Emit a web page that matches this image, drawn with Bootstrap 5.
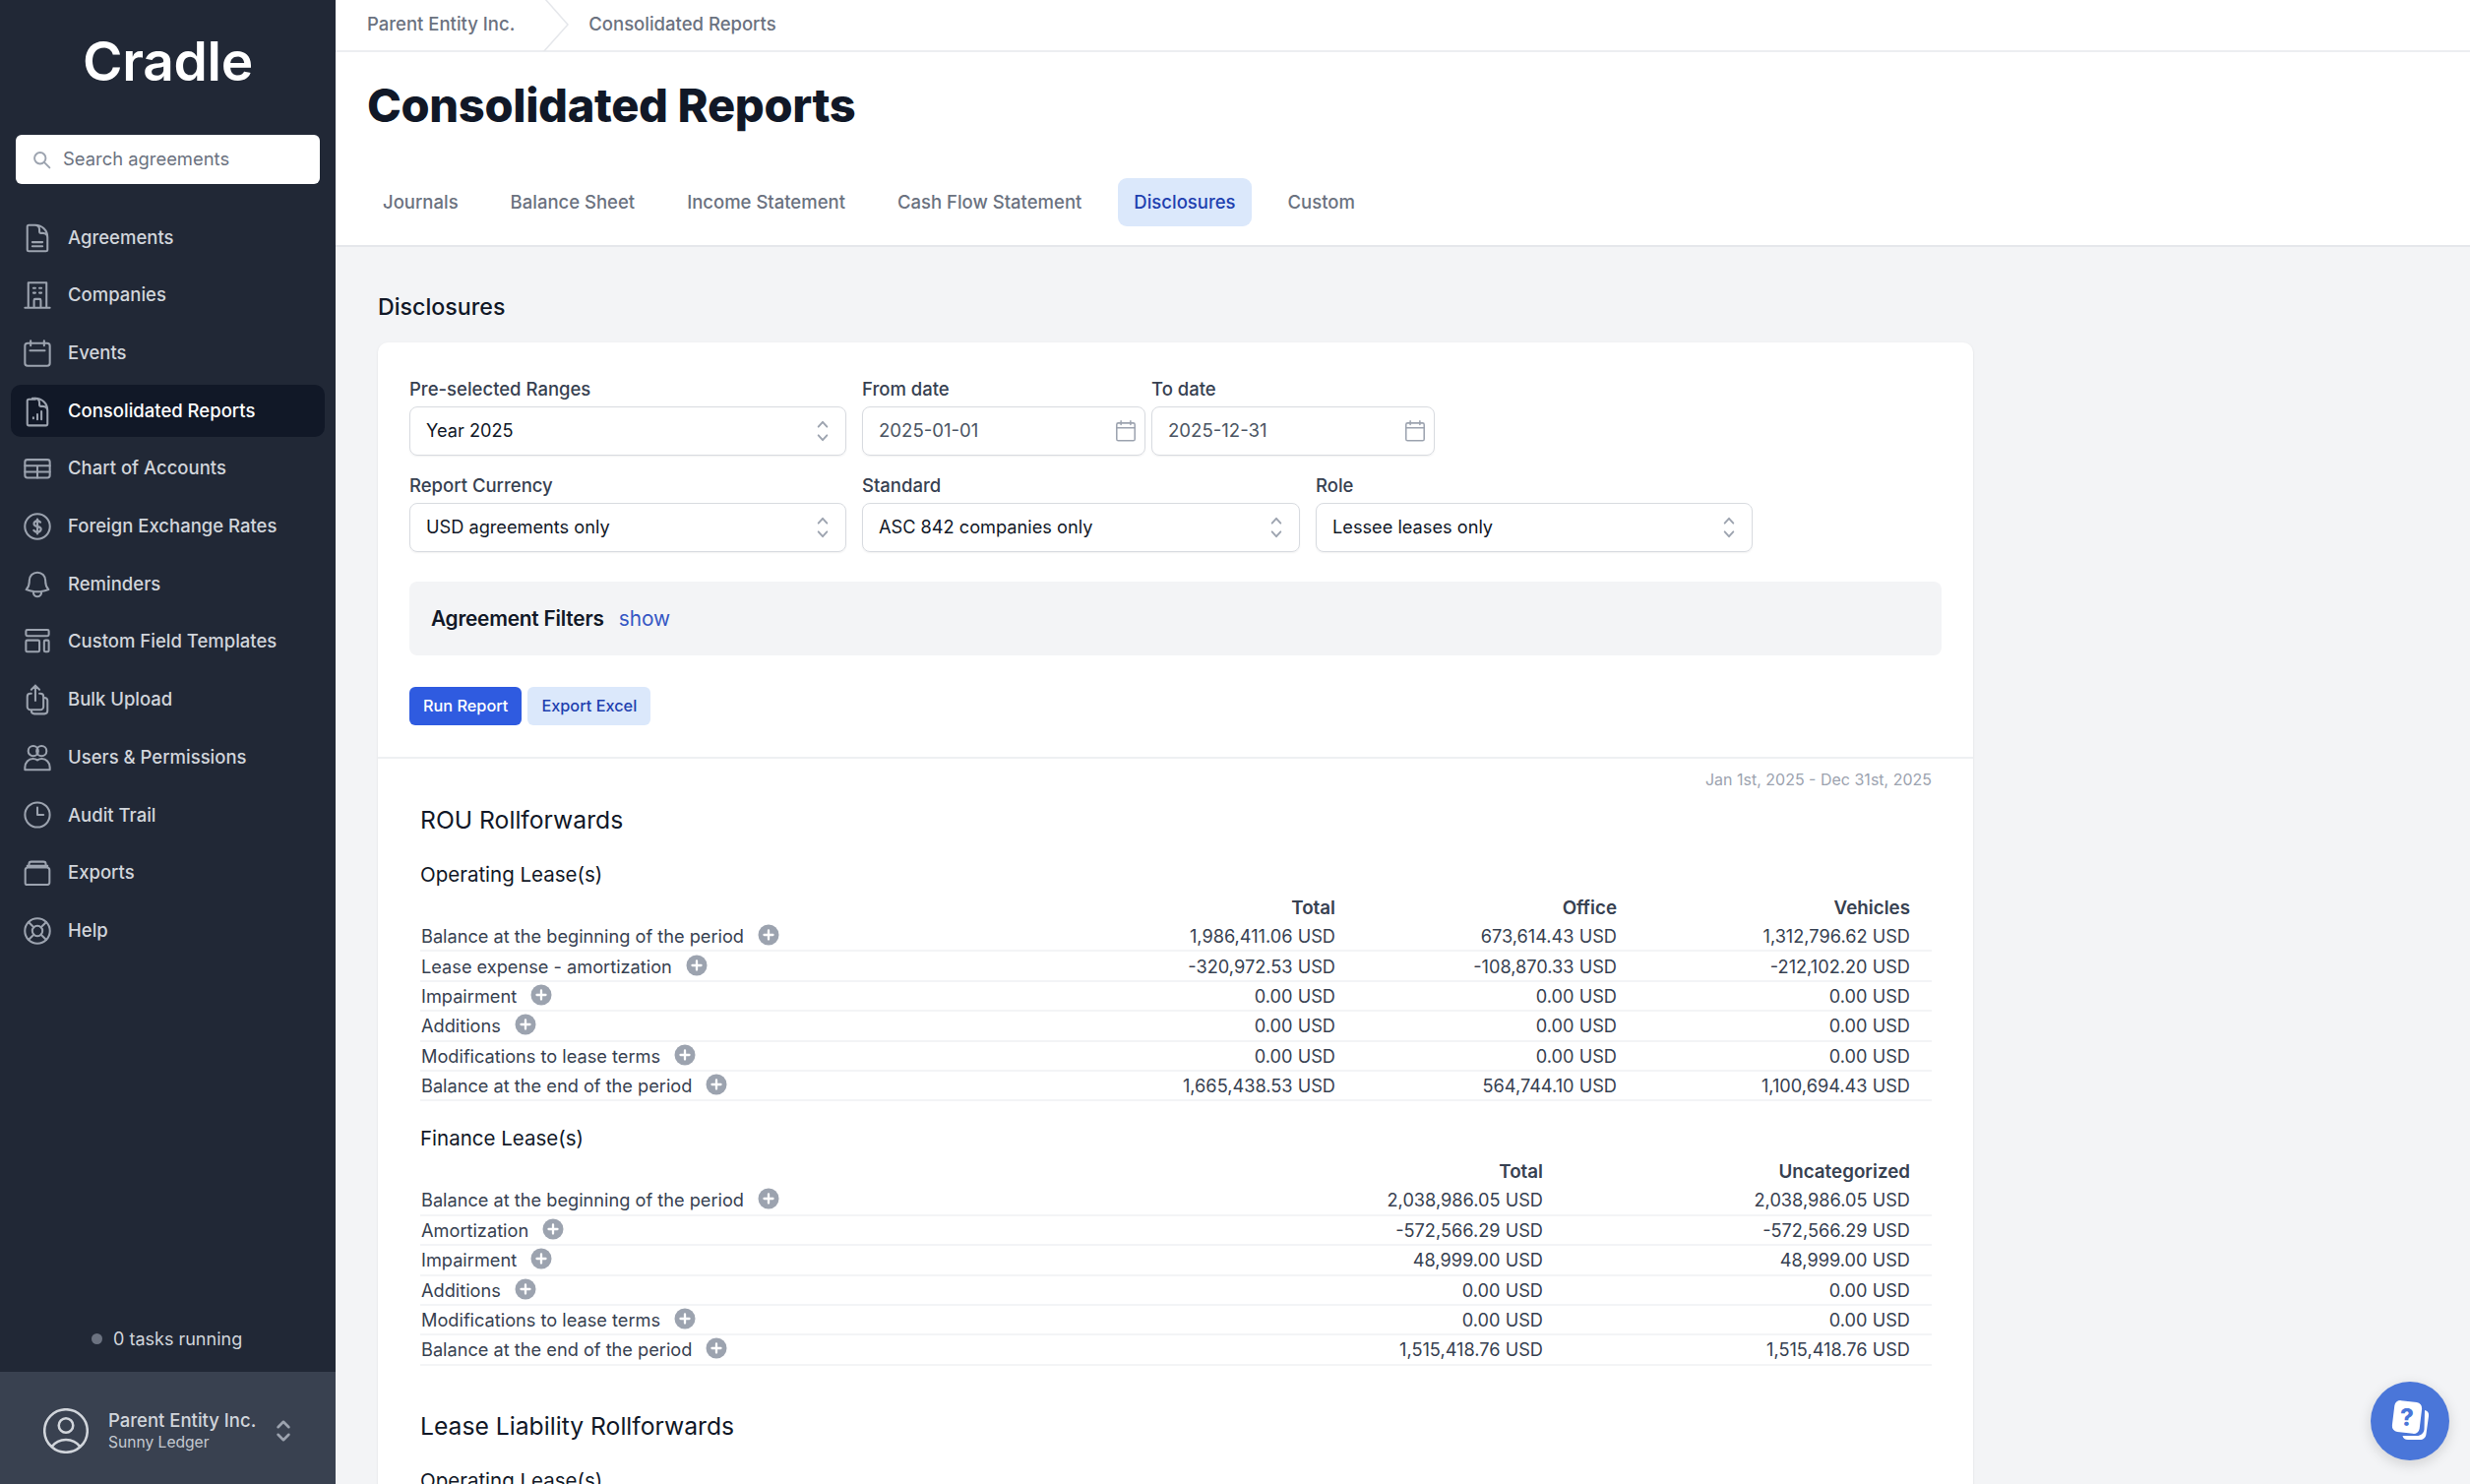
<!doctype html>
<html lang="en">
<head>
<meta charset="utf-8">
<title>Consolidated Reports</title>
<link href="https://cdn.jsdelivr.net/npm/bootstrap@5.3.0/dist/css/bootstrap.min.css" rel="stylesheet">
<style>
html,body{height:100%;}
body{font-family:Inter,"Liberation Sans",sans-serif;background:#f3f4f6;overflow:hidden;color:#374151;}
.shell{height:1508px;position:relative;}
.side{width:341px;flex:none;background:#212836;}
.brand{height:137px;padding-top:24px;font-size:55px;line-height:76px;font-weight:600;letter-spacing:-.3px;color:#fff;text-align:center;}
.srch{margin:0 16px 28px;height:50px;background:#fff;border-radius:6px;padding-left:16px;gap:11px;color:#6b7280;font-size:18.4px;}
.srch svg{width:21px;height:21px;color:#9ca3af;}
.menu{padding:0 11px;gap:5.7px;}
.menu-i{height:53px;padding-left:14px;gap:18px;border-radius:10px;color:#d1d5db;font-size:18.5px;font-weight:500;}
.menu-i svg{width:26px;height:26px;color:#9ca3af;flex:none;overflow:visible;}
.menu-i.on{background:#111827;color:#fff;}
.tasks{padding-left:93px;height:68px;gap:11px;font-size:18px;color:#d1d5db;}
.tasks i{width:11px;height:11px;border-radius:50%;background:#6b7280;display:block;}
.acct{height:114px;background:#394150;padding:5px 44px 0 44px;gap:20px;color:#d1d5db;}
.acct .face{width:46px;height:46px;flex:none;}
.acct .nm{font-size:18.5px;font-weight:500;line-height:24px;white-space:nowrap;}
.acct .sub{font-size:15.6px;line-height:22px;color:#c4c9d1;}
.acct .sw{width:26px;height:26px;flex:none;color:#9ca3af;margin-left:-5px;}
.main{min-width:0;position:relative;overflow:hidden;}
.head{background:#fff;border-bottom:2px solid #e5e7eb;height:251px;}
.crumb{height:53px;border-bottom:2px solid #eceef1;padding:0 0 2px 32px;font-size:18.5px;font-weight:500;color:#6b7280;}
.crumb svg{width:32px;height:52px;margin:2px 15px 0 28px;flex:none;}
.ttl{font-size:47px;font-weight:800;color:#111827;line-height:60px;margin:24px 0 0 32px;letter-spacing:-.35px;}
.tabs{margin:44px 0 0 32px;gap:21px;}
.tabs .nav-link{height:49px;padding:1px 16px 0;display:flex;align-items:center;font-size:18.5px;font-weight:500;color:#6b7280;border-radius:9px;}
.tabs .nav-link.active{background:#dbe8fb;color:#1e40af;}
.sect{font-size:23.2px;font-weight:500;color:#111827;line-height:32px;margin:45px 0 20px 43px;}
.sheet{margin-left:43px;width:1621px;background:#fff;border:0;border-radius:10px;box-shadow:0 1px 3px rgba(0,0,0,.08);}
.frm{padding:35px 32px 32px;border-bottom:2px solid #eef0f2;}
.lab{font-size:18.5px;font-weight:500;color:#374151;line-height:24px;margin-bottom:6px;height:24px;}
.fld{height:50px;border:1.5px solid #d8dbe0;border-radius:8px;padding:0 13px 0 16px;font-size:18.2px;color:#111827;box-shadow:0 1px 2px rgba(0,0,0,.06);}
.fld svg{width:26px;height:26px;color:#9ca3af;flex:none;margin-right:-3px;}
.fld.gry{font-size:18.6px;color:#4b5563;}
.fld.gry svg{margin-right:-7px;}
.w1{width:444px;margin-right:16px;}
.w2{width:288px;margin-right:6px;}
.w3{width:445px;margin-right:16px;}
.rw{margin-bottom:18px;}
.flt{height:75px;background:#f3f4f6;border-radius:8px;padding-left:22px;margin-top:30px;gap:15px;font-size:20.8px;}
.flt b{font-weight:600;color:#111827;letter-spacing:-.2px;}
.flt span{color:#3557c4;}
.btns{margin-top:32px;gap:6px;}
.btns .btn{height:39px;padding:0 14px;border:0;font-size:16.3px;font-weight:500;border-radius:6px;display:flex;align-items:center;}
.b-run{background:#2f5be0;color:#fff;}
.b-exp{background:#dbe8fb;color:#1e40af;}
.rep{padding:0 42px 220px 43px;position:relative;}
.when{text-align:right;font-size:16px;color:#9ca3af;line-height:22px;padding-top:10px;}
.h-a{font-size:24.7px;font-weight:400;color:#111827;line-height:36px;margin:12px 0 0;}
.h-a.nxt{margin-top:43px;}
.h-b{font-size:20.5px;font-weight:400;color:#111827;line-height:28px;margin:24px 0 0;}
.h-b.nxt{margin-top:24px;}
.t-wrap{margin:7px 0 0;}
.sh{width:100%;table-layout:fixed;border-collapse:collapse;font-size:18.2px;color:#374151;}
.sh th{font-weight:600;font-size:18.8px;height:26px;line-height:24px;text-align:right;padding:0 22px 0 0;border:0;}
.sh td{height:30.4px;padding:0 22px 0 0;text-align:right;border-bottom:2px solid #f3f4f6;line-height:24px;white-space:nowrap;}
.sh td:first-child{padding:0 0 0 1px;text-align:left;}
.plus{display:inline-block;width:22px;height:22px;margin-left:14px;vertical-align:-3px;margin-top:-3px;}
.c-a{width:400px;}.c-o{width:286px;}.c-v{width:298px;}.c-u{width:373px;}
.fade{position:absolute;left:0;right:0;bottom:0;height:68px;background:linear-gradient(to bottom,rgba(0,0,0,0),rgba(0,0,0,.06));-webkit-mask-image:linear-gradient(to right,#000 70%,transparent 92%);mask-image:linear-gradient(to right,#000 70%,transparent 92%);pointer-events:none;}
.help{position:absolute;right:21px;bottom:24px;width:80px;height:80px;border-radius:50%;background:#4a76d9;box-shadow:0 4px 14px rgba(0,0,0,.14);display:flex;align-items:center;justify-content:center;}
.help svg{width:46px;height:46px;}
</style>
</head>
<body>
<div class="shell d-flex">
  <aside class="side d-flex flex-column">
    <div class="brand">Cradle</div>
    <div class="srch d-flex align-items-center">
      <svg viewBox="0 0 24 24" fill="none" stroke="currentColor" stroke-width="2.2" stroke-linecap="round"><circle cx="10" cy="10" r="6.500"/><path d="m15 15 6 6"/></svg>
      <span>Search agreements</span>
    </div>
    <nav class="menu d-flex flex-column flex-grow-1">
      <div class="menu-i d-flex align-items-center"><svg viewBox="2.5 2.5 19 19" fill="none" stroke="currentColor" stroke-width="1.5" stroke-linecap="round" stroke-linejoin="round"><path d="M19.5 14.25v-2.625a3.375 3.375 0 0 0-3.375-3.375h-1.5A1.125 1.125 0 0 1 13.5 7.125v-1.5a3.375 3.375 0 0 0-3.375-3.375H8.25m0 12.75h7.5m-7.5 3h7.500M10.5 2.25H5.625c-.621 0-1.125.504-1.125 1.125v17.25c0 .621.504 1.125 1.125 1.125h12.75c.621 0 1.125-.504 1.125-1.125V11.25a9 9 0 0 0-9-9Z"/></svg><span>Agreements</span></div>
      <div class="menu-i d-flex align-items-center"><svg viewBox="2.5 2.5 19 19" fill="none" stroke="currentColor" stroke-width="1.5" stroke-linecap="round" stroke-linejoin="round"><path d="M2.750 21.250h18.500M5.250 2.750h13.500M5.250 2.750v18.500m13.500-18.500v18.500M9 6.750h1.500m3 0H15M9 10.250h1.500m3 0H15M9.500 21.250v-5.500c0-.5.400-.9.900-.9h3.200c.5 0 .9.400.9.900v5.500"/></svg><span>Companies</span></div>
      <div class="menu-i d-flex align-items-center"><svg viewBox="2.5 2.5 19 19" fill="none" stroke="currentColor" stroke-width="1.5" stroke-linecap="round" stroke-linejoin="round"><rect x="2.750" y="4.500" width="18.500" height="16.750" rx="2"/><path d="M7 2.750v3.500M17 2.750v3.500M6.500 10h11"/></svg><span>Events</span></div>
      <div class="menu-i on d-flex align-items-center"><svg viewBox="2.5 2.5 19 19" fill="none" stroke="currentColor" stroke-width="1.5" stroke-linecap="round" stroke-linejoin="round"><path d="M19.5 14.25v-2.625a3.375 3.375 0 0 0-3.375-3.375h-1.5A1.125 1.125 0 0 1 13.5 7.125v-1.5a3.375 3.375 0 0 0-3.375-3.375H8.25M9 16.5v.75m3-3v3.75m3-6v6m-4.5-15H5.625c-.621 0-1.125.504-1.125 1.125v17.25c0 .621.504 1.125 1.125 1.125h12.75c.621 0 1.125-.504 1.125-1.125V11.25a9 9 0 0 0-9-9Z"/></svg><span>Consolidated Reports</span></div>
      <div class="menu-i d-flex align-items-center"><svg viewBox="2.5 2.5 19 19" fill="none" stroke="currentColor" stroke-width="1.5" stroke-linecap="round" stroke-linejoin="round"><rect x="2.750" y="5.500" width="18.500" height="13.500" rx="1.800"/><path d="M2.750 10h18.500M2.750 14.500h18.500M12 10v9"/></svg><span>Chart of Accounts</span></div>
      <div class="menu-i d-flex align-items-center"><svg viewBox="2.5 2.5 19 19" fill="none" stroke="currentColor" stroke-width="1.5" stroke-linecap="round" stroke-linejoin="round"><circle cx="12" cy="12" r="9.300"/><path stroke-width="1.600" d="M12 6.500v11m-2.700-2.600.8.600c1.050.8 2.750.8 3.800 0 1.050-.8 1.050-2.100 0-2.900-.5-.4-1.200-.6-1.900-.6-.65 0-1.300-.2-1.800-.6-1-.8-1-2.100 0-2.900s2.600-.8 3.600 0l.4.300"/></svg><span>Foreign Exchange Rates</span></div>
      <div class="menu-i d-flex align-items-center"><svg viewBox="2.5 2.5 19 19" fill="none" stroke="currentColor" stroke-width="1.5" stroke-linecap="round" stroke-linejoin="round"><path d="M14.857 17.082a23.848 23.848 0 0 0 5.454-1.31A8.967 8.967 0 0 1 18 9.75V9A6 6 0 0 0 6 9v.75a8.967 8.967 0 0 1-2.312 6.022c1.733.64 3.56 1.085 5.455 1.31m5.714 0a24.255 24.255 0 0 1-5.714 0m5.714 0a3 3 0 1 1-5.714 0"/></svg><span>Reminders</span></div>
      <div class="menu-i d-flex align-items-center"><svg viewBox="2.5 2.5 19 19" fill="none" stroke="currentColor" stroke-width="1.5" stroke-linecap="round" stroke-linejoin="round"><rect x="3.500" y="3.250" width="17" height="4.500" rx="1"/><rect x="3.500" y="11" width="10" height="8.500" rx="1"/><rect x="17" y="11" width="3.500" height="8.500" rx="1"/></svg><span>Custom Field Templates</span></div>
      <div class="menu-i d-flex align-items-center"><svg viewBox="2.5 2.5 19 19" fill="none" stroke="currentColor" stroke-width="1.5" stroke-linecap="round" stroke-linejoin="round"><path d="M7.500 7.500h-.75A2.250 2.250 0 0 0 4.500 9.750v7.500a2.250 2.250 0 0 0 2.250 2.250h7.500a2.250 2.250 0 0 0 2.250-2.250v-7.500a2.250 2.250 0 0 0-2.250-2.250h-.75m0-3-3-3m0 0-3 3m3-3v11.250m6-2.250h.75a2.250 2.250 0 0 1 2.250 2.250v7.500a2.250 2.250 0 0 1-2.250 2.250h-7.500a2.250 2.250 0 0 1-2.250-2.250v-.75"/></svg><span>Bulk Upload</span></div>
      <div class="menu-i d-flex align-items-center"><svg viewBox="2.5 2.5 19 19" fill="none" stroke="currentColor" stroke-width="1.5" stroke-linecap="round" stroke-linejoin="round"><circle cx="8.900" cy="7" r="3.700"/><circle cx="15.100" cy="7" r="3.700"/><path d="M2.750 21v-1.800c0-3.800 2.800-6.500 5.900-6.500 1.400 0 2.500.4 3.350 1.100.85-.7 1.950-1.100 3.350-1.100 3.100 0 5.900 2.700 5.900 6.500V21H2.750Z"/></svg><span>Users &amp; Permissions</span></div>
      <div class="menu-i d-flex align-items-center"><svg viewBox="2.5 2.5 19 19" fill="none" stroke="currentColor" stroke-width="1.5" stroke-linecap="round" stroke-linejoin="round"><circle cx="12" cy="12" r="9.200"/><path d="M12 6.500V12h4.500"/></svg><span>Audit Trail</span></div>
      <div class="menu-i d-flex align-items-center"><svg viewBox="2.5 2.5 19 19" fill="none" stroke="currentColor" stroke-width="1.5" stroke-linecap="round" stroke-linejoin="round"><path d="M5.750 7.500V5.500a1.800 1.800 0 0 1 1.800-1.800h8.900a1.800 1.800 0 0 1 1.800 1.800v2M4.500 6.800h15M3 19.200V10a2 2 0 0 1 2-2h14a2 2 0 0 1 2 2v9.200a1.500 1.500 0 0 1-1.500 1.500h-16A1.500 1.500 0 0 1 3 19.200Z"/></svg><span>Exports</span></div>
      <div class="menu-i d-flex align-items-center"><svg viewBox="2.5 2.5 19 19" fill="none" stroke="currentColor" stroke-width="1.5" stroke-linecap="round" stroke-linejoin="round"><circle cx="12" cy="12" r="9.300"/><circle cx="12" cy="12" r="3.800"/><path d="m5.400 5.400 3.900 3.900m5.400 5.400 3.900 3.900m0-13.200-3.900 3.900m-5.400 5.400-3.900 3.900"/></svg><span>Help</span></div>
    </nav>
    <div class="tasks d-flex align-items-center"><i></i><span>0 tasks running</span></div>
    <div class="acct d-flex align-items-center">
      <svg class="face" viewBox="2.5 2.5 19 19" fill="none" stroke="currentColor" stroke-width="1.050" stroke-linecap="round" stroke-linejoin="round"><path d="M17.982 18.725A7.488 7.488 0 0 0 12 15.75a7.488 7.488 0 0 0-5.982 2.975m11.963 0a9 9 0 1 0-11.963 0m11.963 0A8.966 8.966 0 0 1 12 21a8.966 8.966 0 0 1-5.982-2.275M15 9.75a3 3 0 1 1-6 0 3 3 0 0 1 6 0Z"/></svg>
      <div><div class="nm">Parent Entity Inc.</div><div class="sub">Sunny Ledger</div></div>
      <svg class="sw" viewBox="0 0 24 24" fill="none" stroke="currentColor" stroke-width="2.400" stroke-linecap="round" stroke-linejoin="round"><path d="m7 8.500 5-5 5 5M7 15.500l5 5 5-5"/></svg>
    </div>
  </aside>

  <main class="main flex-grow-1">
    <header class="head">
      <div class="crumb d-flex align-items-center">
        <span>Parent Entity Inc.</span>
        <svg viewBox="0 0 32 52" fill="none" stroke="#e5e7eb" stroke-width="1.500"><path d="M3 -1 26 25 1 53"/></svg>
        <span>Consolidated Reports</span>
      </div>
      <h1 class="ttl">Consolidated Reports</h1>
      <ul class="nav nav-pills tabs">
        <li class="nav-item"><a class="nav-link" href="#">Journals</a></li>
        <li class="nav-item"><a class="nav-link" href="#">Balance Sheet</a></li>
        <li class="nav-item"><a class="nav-link" href="#">Income Statement</a></li>
        <li class="nav-item"><a class="nav-link" href="#">Cash Flow Statement</a></li>
        <li class="nav-item"><a class="nav-link active" href="#">Disclosures</a></li>
        <li class="nav-item"><a class="nav-link" href="#">Custom</a></li>
      </ul>
    </header>

    <div class="sect">Disclosures</div>
    <section class="sheet">
      <div class="frm">
        <div class="d-flex rw">
          <div class="w1"><div class="lab">Pre-selected Ranges</div><div class="fld d-flex align-items-center justify-content-between"><span>Year 2025</span><svg viewBox="0 0 24 24" fill="none" stroke="currentColor" stroke-width="1.700" stroke-linecap="round" stroke-linejoin="round"><path d="m8 8 4-4.500 4 4.500M8 16l4 4.500 4-4.500"/></svg></div></div>
          <div class="w2"><div class="lab">From date</div><div class="fld gry d-flex align-items-center justify-content-between"><span>2025-01-01</span><svg viewBox="0 0 24 24" fill="none" stroke="currentColor" stroke-width="1.400" stroke-linecap="round" stroke-linejoin="round"><rect x="3.500" y="4.500" width="17" height="16.500" rx="1.500"/><path d="M7.500 2.500v3.500M16.500 2.500v3.500M3.500 9h17"/></svg></div></div>
          <div class="w2"><div class="lab">To date</div><div class="fld gry d-flex align-items-center justify-content-between"><span>2025-12-31</span><svg viewBox="0 0 24 24" fill="none" stroke="currentColor" stroke-width="1.400" stroke-linecap="round" stroke-linejoin="round"><rect x="3.500" y="4.500" width="17" height="16.500" rx="1.500"/><path d="M7.500 2.500v3.500M16.500 2.500v3.500M3.500 9h17"/></svg></div></div>
        </div>
        <div class="d-flex">
          <div class="w1"><div class="lab">Report Currency</div><div class="fld d-flex align-items-center justify-content-between"><span>USD agreements only</span><svg viewBox="0 0 24 24" fill="none" stroke="currentColor" stroke-width="1.700" stroke-linecap="round" stroke-linejoin="round"><path d="m8 8 4-4.500 4 4.500M8 16l4 4.500 4-4.500"/></svg></div></div>
          <div class="w3"><div class="lab">Standard</div><div class="fld d-flex align-items-center justify-content-between"><span>ASC 842 companies only</span><svg viewBox="0 0 24 24" fill="none" stroke="currentColor" stroke-width="1.700" stroke-linecap="round" stroke-linejoin="round"><path d="m8 8 4-4.500 4 4.500M8 16l4 4.500 4-4.500"/></svg></div></div>
          <div class="w1"><div class="lab">Role</div><div class="fld d-flex align-items-center justify-content-between"><span>Lessee leases only</span><svg viewBox="0 0 24 24" fill="none" stroke="currentColor" stroke-width="1.700" stroke-linecap="round" stroke-linejoin="round"><path d="m8 8 4-4.500 4 4.500M8 16l4 4.500 4-4.500"/></svg></div></div>
        </div>
        <div class="flt d-flex align-items-center"><b>Agreement Filters</b><span>show</span></div>
        <div class="btns d-flex">
          <button class="btn b-run" type="button">Run Report</button>
          <button class="btn b-exp" type="button">Export Excel</button>
        </div>
      </div>
      <div class="rep">
        <div class="when">Jan 1st, 2025 - Dec 31st, 2025</div>
        <h2 class="h-a">ROU Rollforwards</h2>
        <h3 class="h-b">Operating Lease(s)</h3>
        <div class="t-wrap">
          <table class="sh">
            <colgroup><col><col class="c-a"><col class="c-o"><col class="c-v"></colgroup>
            <thead><tr><th></th><th>Total</th><th>Office</th><th>Vehicles</th></tr></thead>
            <tbody>
              <tr><td>Balance at the beginning of the period<svg class="plus" viewBox="0 0 22 22"><circle cx="11" cy="11" r="10.500" fill="#9ca3af"/><path d="M11 6.500v9M6.500 11h9" stroke="#fff" stroke-width="2.300" stroke-linecap="round"/></svg></td><td>1,986,411.06 USD</td><td>673,614.43 USD</td><td>1,312,796.62 USD</td></tr>
              <tr><td>Lease expense - amortization<svg class="plus" viewBox="0 0 22 22"><circle cx="11" cy="11" r="10.500" fill="#9ca3af"/><path d="M11 6.500v9M6.500 11h9" stroke="#fff" stroke-width="2.300" stroke-linecap="round"/></svg></td><td>-320,972.53 USD</td><td>-108,870.33 USD</td><td>-212,102.20 USD</td></tr>
              <tr><td>Impairment<svg class="plus" viewBox="0 0 22 22"><circle cx="11" cy="11" r="10.500" fill="#9ca3af"/><path d="M11 6.500v9M6.500 11h9" stroke="#fff" stroke-width="2.300" stroke-linecap="round"/></svg></td><td>0.00 USD</td><td>0.00 USD</td><td>0.00 USD</td></tr>
              <tr><td>Additions<svg class="plus" viewBox="0 0 22 22"><circle cx="11" cy="11" r="10.500" fill="#9ca3af"/><path d="M11 6.500v9M6.500 11h9" stroke="#fff" stroke-width="2.300" stroke-linecap="round"/></svg></td><td>0.00 USD</td><td>0.00 USD</td><td>0.00 USD</td></tr>
              <tr><td>Modifications to lease terms<svg class="plus" viewBox="0 0 22 22"><circle cx="11" cy="11" r="10.500" fill="#9ca3af"/><path d="M11 6.500v9M6.500 11h9" stroke="#fff" stroke-width="2.300" stroke-linecap="round"/></svg></td><td>0.00 USD</td><td>0.00 USD</td><td>0.00 USD</td></tr>
              <tr><td>Balance at the end of the period<svg class="plus" viewBox="0 0 22 22"><circle cx="11" cy="11" r="10.500" fill="#9ca3af"/><path d="M11 6.500v9M6.500 11h9" stroke="#fff" stroke-width="2.300" stroke-linecap="round"/></svg></td><td>1,665,438.53 USD</td><td>564,744.10 USD</td><td>1,100,694.43 USD</td></tr>
            </tbody>
          </table>
        </div>
        <h3 class="h-b nxt">Finance Lease(s)</h3>
        <div class="t-wrap">
          <table class="sh">
            <colgroup><col><col class="c-a"><col class="c-u"></colgroup>
            <thead><tr><th></th><th>Total</th><th>Uncategorized</th></tr></thead>
            <tbody>
              <tr><td>Balance at the beginning of the period<svg class="plus" viewBox="0 0 22 22"><circle cx="11" cy="11" r="10.500" fill="#9ca3af"/><path d="M11 6.500v9M6.500 11h9" stroke="#fff" stroke-width="2.300" stroke-linecap="round"/></svg></td><td>2,038,986.05 USD</td><td>2,038,986.05 USD</td></tr>
              <tr><td>Amortization<svg class="plus" viewBox="0 0 22 22"><circle cx="11" cy="11" r="10.500" fill="#9ca3af"/><path d="M11 6.500v9M6.500 11h9" stroke="#fff" stroke-width="2.300" stroke-linecap="round"/></svg></td><td>-572,566.29 USD</td><td>-572,566.29 USD</td></tr>
              <tr><td>Impairment<svg class="plus" viewBox="0 0 22 22"><circle cx="11" cy="11" r="10.500" fill="#9ca3af"/><path d="M11 6.500v9M6.500 11h9" stroke="#fff" stroke-width="2.300" stroke-linecap="round"/></svg></td><td>48,999.00 USD</td><td>48,999.00 USD</td></tr>
              <tr><td>Additions<svg class="plus" viewBox="0 0 22 22"><circle cx="11" cy="11" r="10.500" fill="#9ca3af"/><path d="M11 6.500v9M6.500 11h9" stroke="#fff" stroke-width="2.300" stroke-linecap="round"/></svg></td><td>0.00 USD</td><td>0.00 USD</td></tr>
              <tr><td>Modifications to lease terms<svg class="plus" viewBox="0 0 22 22"><circle cx="11" cy="11" r="10.500" fill="#9ca3af"/><path d="M11 6.500v9M6.500 11h9" stroke="#fff" stroke-width="2.300" stroke-linecap="round"/></svg></td><td>0.00 USD</td><td>0.00 USD</td></tr>
              <tr><td>Balance at the end of the period<svg class="plus" viewBox="0 0 22 22"><circle cx="11" cy="11" r="10.500" fill="#9ca3af"/><path d="M11 6.500v9M6.500 11h9" stroke="#fff" stroke-width="2.300" stroke-linecap="round"/></svg></td><td>1,515,418.76 USD</td><td>1,515,418.76 USD</td></tr>
            </tbody>
          </table>
        </div>
        <h2 class="h-a nxt">Lease Liability Rollforwards</h2>
        <h3 class="h-b">Operating Lease(s)</h3>
      </div>
    </section>
    <div class="fade"></div>
    <div class="help">
      <svg viewBox="0 0 46 46"><path d="M38 12c3 .5 4.500 2.500 4 6l-2.500 18c-.5 4-3 6-6.500 6H21c-3 0-5-1.500-5.500-4H30c4 0 7-2.500 7.500-6.500Z" fill="#fff"/><rect x="6" y="3" width="28" height="32" rx="6" fill="#fff" transform="rotate(7 20 19)"/><text x="20" y="28" text-anchor="middle" font-family="Inter,sans-serif" font-size="24" font-weight="800" fill="#4a76d9">?</text></svg>
    </div>
  </main>
</div>
<script src="https://cdn.jsdelivr.net/npm/bootstrap@5.3.0/dist/js/bootstrap.bundle.min.js"></script>
</body>
</html>
